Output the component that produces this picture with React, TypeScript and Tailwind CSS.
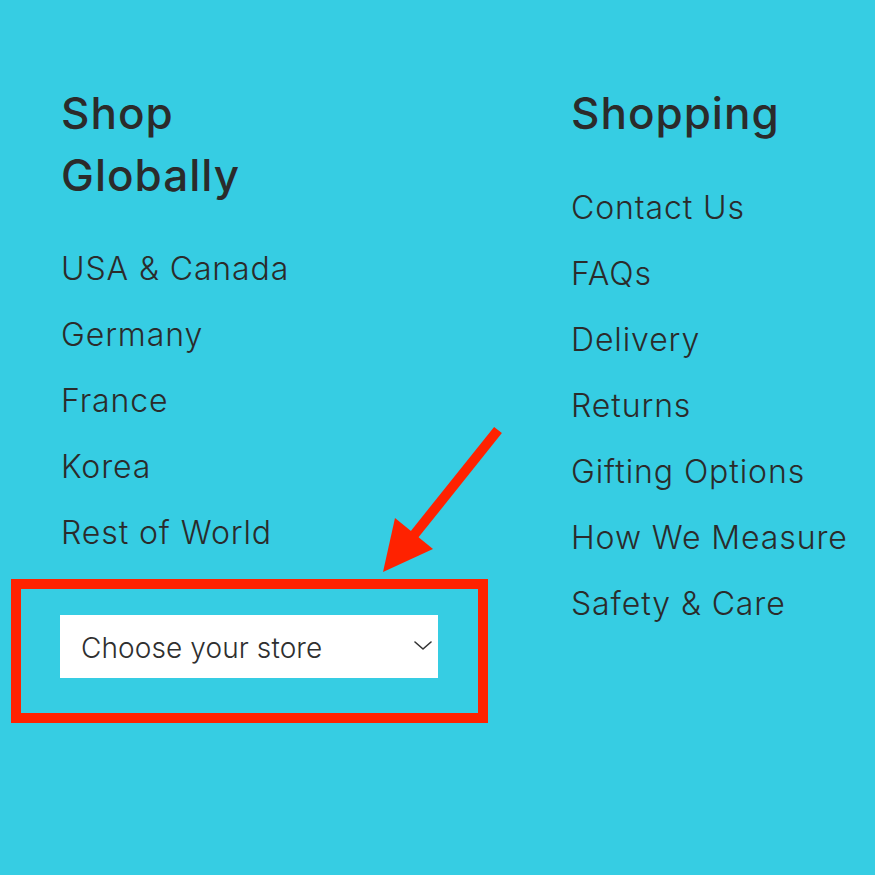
import React from 'react';

const globalLinks = ['USA & Canada', 'Germany', 'France', 'Korea', 'Rest of World'];
const shoppingLinks = [
  'Contact Us',
  'FAQs',
  'Delivery',
  'Returns',
  'Gifting Options',
  'How We Measure',
  'Safety & Care',
];

const font = { fontFamily: 'Inter, "Noto Sans", sans-serif' };

export default function App() {
  return (
    <div
      className="relative w-[875px] h-[875px] overflow-hidden bg-[#36cde3] text-[#2b2b2b]"
      style={font}
    >
      <div className="flex pl-[61px] pt-[82px]">
        {/* Shop Globally */}
        <div className="w-[510px]">
          <h2 className="text-[44px] leading-[62px] font-medium tracking-[1px]">
            Shop
            <br />
            Globally
          </h2>
          <ul className="mt-[30px]">
            {globalLinks.map((l) => (
              <li key={l} className="text-[32px] leading-[66px] font-light tracking-[0.9px]">
                {l}
              </li>
            ))}
          </ul>
          <div className="mt-[49px] -ml-[1px] w-[378px] h-[63px] bg-white flex items-center justify-between pl-[21px] pr-[6px] pt-[3px]">
            <span className="text-[28px] font-light tracking-[0.1px] text-[#2f2f2f]">Choose your store</span>
            <svg width="18" height="9" viewBox="0 0 18 9" fill="none" className="-mt-[6px]">
              <path d="M1 1l8 7 8-7" stroke="#333" strokeWidth="1.6" strokeLinecap="round" strokeLinejoin="round" />
            </svg>
          </div>
        </div>

        {/* Shopping */}
        <div>
          <h2 className="text-[44px] leading-[62px] font-medium tracking-[1px]">Shopping</h2>
          <ul className="mt-[31px]">
            {shoppingLinks.map((l) => (
              <li key={l} className="text-[32px] leading-[66px] font-light tracking-[0.9px]">
                {l}
              </li>
            ))}
          </ul>
        </div>
      </div>

      {/* annotation overlay */}
      <div className="absolute left-[11px] top-[579px] w-[477px] h-[144px] border-[10px] border-[#ff2200]" />
      <svg className="absolute left-0 top-0" width="875" height="875" viewBox="0 0 875 875">
        <line x1="498" y1="430" x2="410" y2="540" stroke="#ff2200" strokeWidth="10" />
        <polygon points="383,572 395,518 433,549" fill="#ff2200" />
      </svg>
    </div>
  );
}
